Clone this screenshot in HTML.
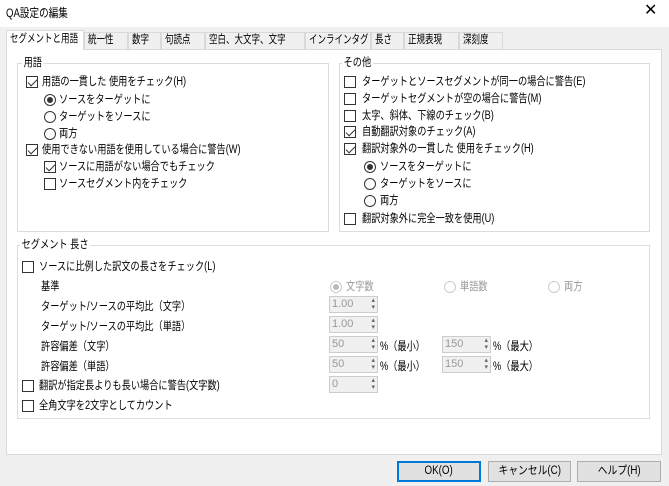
<!DOCTYPE html>
<html><head><meta charset="utf-8"><style>
*{margin:0;padding:0;box-sizing:border-box}
body{width:669px;height:486px;background:#f0f0f0;font-family:"Liberation Sans","Noto Sans CJK JP",sans-serif;font-size:11.5px;color:#000;position:relative;overflow:hidden}
.a{position:absolute;white-space:nowrap;line-height:14px;transform:scaleX(.8);transform-origin:left center}
.title{position:absolute;left:0;top:0;width:669px;height:27px;background:#fff}
.panel{position:absolute;left:6px;top:49px;width:656px;height:406px;background:#fff;border:1px solid #d9d9d9}
.tab{position:absolute;top:32px;height:17px;background:#f0f0f0;border:1px solid #d9d9d9;border-bottom:none;line-height:15px;padding:0 3px;font-size:11.5px;white-space:nowrap;overflow:hidden}
.tab span{display:inline-block;transform:scaleX(.74);transform-origin:left center}
.tab.sel{top:30px;height:20px;background:#fff;z-index:2;line-height:17px}
.grp{position:absolute;border:1px solid #dcdcdc}
.cb{position:absolute;width:12px;height:12px;border:1px solid #333;background:#fff}
.cb.on::after{content:"";position:absolute;left:3px;top:0px;width:4px;height:8px;border:solid #333;border-width:0 1.5px 1.5px 0;transform:rotate(45deg)}
.rb{position:absolute;width:12px;height:12px;border:1px solid #333;border-radius:50%;background:#fff}
.rb.on::after{content:"";position:absolute;left:2px;top:2px;width:6px;height:6px;border-radius:50%;background:#333}
.rb.dis{border-color:#ccc}
.rb.dis.on::after{background:#bbb}
.gray{color:#999}
.spin{position:absolute;width:49px;height:17px;border:1px solid #ccc;background:#f0f0f0;color:#999;font-size:11px;line-height:15px;padding-left:2px}
.spin::after{content:"▴\A▾";white-space:pre;position:absolute;right:2px;top:0;font-size:7px;line-height:7px;color:#666}
.btn{position:absolute;top:461px;height:21px;background:#e1e1e1;border:1px solid #adadad;text-align:center;line-height:19px;font-size:11.5px}
.btn span{display:inline-block;transform:scaleX(.85)}
</style></head><body>
<div class="title"></div>
<div class="a" style="left:6px;top:6px;font-size:12px">QA設定の編集</div>
<div class="a" style="left:644px;top:4px;font-size:16px;transform:none">✕</div>
<div class="panel"></div>
<div class="tab sel" style="left:6px;width:78px"><span>セグメントと用語</span></div>
<div class="tab" style="left:84px;width:44px"><span>統一性</span></div>
<div class="tab" style="left:128px;width:33px"><span>数字</span></div>
<div class="tab" style="left:161px;width:44px"><span>句読点</span></div>
<div class="tab" style="left:205px;width:100px"><span>空白、大文字、文字</span></div>
<div class="tab" style="left:305px;width:66px"><span>インラインタグ</span></div>
<div class="tab" style="left:371px;width:33px"><span>長さ</span></div>
<div class="tab" style="left:404px;width:55px"><span>正規表現</span></div>
<div class="tab" style="left:459px;width:44px"><span>深刻度</span></div>

<div class="grp" style="left:17px;top:63px;width:312px;height:169px"></div>
<div class="a" style="left:22px;top:56px;background:#fff;padding:0 2px">用語</div>
<div class="cb on" style="left:26px;top:76px"></div><div class="a" style="left:42px;top:75px">用語の一貫した 使用をチェック(H)</div>
<div class="rb on" style="left:44px;top:94px"></div><div class="a" style="left:59px;top:93px">ソースをターゲットに</div>
<div class="rb" style="left:44px;top:111px"></div><div class="a" style="left:59px;top:110px">ターゲットをソースに</div>
<div class="rb" style="left:44px;top:128px"></div><div class="a" style="left:59px;top:127px">両方</div>
<div class="cb on" style="left:26px;top:144px"></div><div class="a" style="left:42px;top:143px">使用できない用語を使用している場合に警告(W)</div>
<div class="cb on" style="left:44px;top:161px"></div><div class="a" style="left:59px;top:160px">ソースに用語がない場合でもチェック</div>
<div class="cb" style="left:44px;top:178px"></div><div class="a" style="left:59px;top:177px">ソースセグメント内をチェック</div>

<div class="grp" style="left:339px;top:63px;width:311px;height:169px"></div>
<div class="a" style="left:342px;top:56px;background:#fff;padding:0 2px">その他</div>
<div class="cb" style="left:344px;top:76px"></div><div class="a" style="left:362px;top:75px">ターゲットとソースセグメントが同一の場合に警告(E)</div>
<div class="cb" style="left:344px;top:93px"></div><div class="a" style="left:362px;top:92px">ターゲットセグメントが空の場合に警告(M)</div>
<div class="cb" style="left:344px;top:110px"></div><div class="a" style="left:362px;top:109px">太字、斜体、下線のチェック(B)</div>
<div class="cb on" style="left:344px;top:126px"></div><div class="a" style="left:362px;top:125px">自動翻訳対象のチェック(A)</div>
<div class="cb on" style="left:344px;top:143px"></div><div class="a" style="left:362px;top:142px">翻訳対象外の一貫した 使用をチェック(H)</div>
<div class="rb on" style="left:364px;top:161px"></div><div class="a" style="left:380px;top:160px">ソースをターゲットに</div>
<div class="rb" style="left:364px;top:178px"></div><div class="a" style="left:380px;top:177px">ターゲットをソースに</div>
<div class="rb" style="left:364px;top:195px"></div><div class="a" style="left:380px;top:194px">両方</div>
<div class="cb" style="left:344px;top:213px"></div><div class="a" style="left:362px;top:212px">翻訳対象外に完全一致を使用(U)</div>

<div class="grp" style="left:17px;top:245px;width:633px;height:174px"></div>
<div class="a" style="left:20px;top:238px;background:#fff;padding:0 2px">セグメント 長さ</div>
<div class="cb" style="left:22px;top:261px"></div><div class="a" style="left:39px;top:260px">ソースに比例した訳文の長さをチェック(L)</div>
<div class="a" style="left:41px;top:280px">基準</div>
<div class="rb dis on" style="left:330px;top:281px"></div><div class="a gray" style="left:346px;top:280px">文字数</div>
<div class="rb dis" style="left:444px;top:281px"></div><div class="a gray" style="left:460px;top:280px">単語数</div>
<div class="rb dis" style="left:548px;top:281px"></div><div class="a gray" style="left:564px;top:280px">両方</div>
<div class="a" style="left:41px;top:300px">ターゲット/ソースの平均比（文字）</div>
<div class="spin" style="left:329px;top:296px">1.00</div>
<div class="a" style="left:41px;top:320px">ターゲット/ソースの平均比（単語）</div>
<div class="spin" style="left:329px;top:316px">1.00</div>
<div class="a" style="left:41px;top:340px">許容偏差（文字）</div>
<div class="spin" style="left:329px;top:336px">50</div><div class="a" style="left:380px;top:340px">%（最小）</div>
<div class="spin" style="left:442px;top:336px">150</div><div class="a" style="left:493px;top:340px">%（最大）</div>
<div class="a" style="left:41px;top:360px">許容偏差（単語）</div>
<div class="spin" style="left:329px;top:356px">50</div><div class="a" style="left:380px;top:360px">%（最小）</div>
<div class="spin" style="left:442px;top:356px">150</div><div class="a" style="left:493px;top:360px">%（最大）</div>
<div class="cb" style="left:22px;top:380px"></div><div class="a" style="left:39px;top:379px">翻訳が指定長よりも長い場合に警告(文字数)</div>
<div class="spin" style="left:329px;top:376px">0</div>
<div class="cb" style="left:22px;top:400px"></div><div class="a" style="left:39px;top:399px">全角文字を2文字としてカウント</div>

<div class="btn" style="left:397px;width:84px;border:2px solid #0078d7;line-height:17px"><span>OK(O)</span></div>
<div class="btn" style="left:488px;width:83px"><span>キャンセル(C)</span></div>
<div class="btn" style="left:577px;width:84px"><span>ヘルプ(H)</span></div>
</body></html>
